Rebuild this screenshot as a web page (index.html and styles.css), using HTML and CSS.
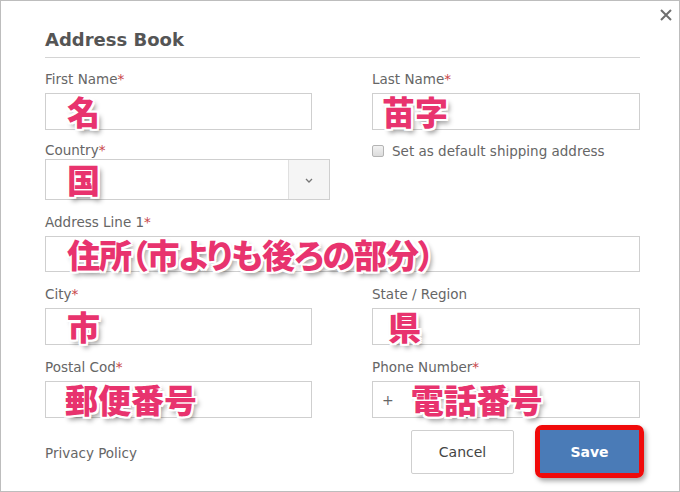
FILE: index.html
```html
<!DOCTYPE html>
<html lang="ja">
<head>
  <meta charset="UTF-8" />
  <meta name="viewport" content="width=device-width, initial-scale=1.0"/>
  <title>Address Book</title>
  <link rel="stylesheet" href="styles.css">
</head>
<body>

  <div class="dialog">
    <svg class="close" width="12" height="12" viewBox="0 0 12 12">
      <path d="M1 1 L11 11 M11 1 L1 11" stroke="#6f6f6f" stroke-width="2" fill="none"/>
    </svg>

    <h1 class="title">Address Book</h1>

    <div class="form">
      <div class="field">
        <div class="label">First Name<span class="req">*</span></div>
        <div class="input"><span class="note">名</span></div>
      </div>
      <div class="field">
        <div class="label">Last Name<span class="req">*</span></div>
        <div class="input pad-s"><span class="note">苗字</span></div>
      </div>

      <div class="field">
        <div class="label tight">Country<span class="req">*</span></div>
        <div class="select">
          <div class="input select-box"><span class="note">国</span></div>
          <div class="select-btn">
            <svg width="8" height="5" viewBox="0 0 8 5">
              <path d="M1 1 L4 4 L7 1" stroke="#777" stroke-width="1.3" fill="none"/>
            </svg>
          </div>
        </div>
      </div>
      <div class="field">
        <label class="check"><span class="box"></span>Set as default shipping address</label>
      </div>

      <div class="field wide">
        <div class="label">Address Line 1<span class="req">*</span></div>
        <div class="input"><span class="note narrow">住所（市よりも後ろの部分）</span></div>
      </div>

      <div class="field">
        <div class="label">City<span class="req">*</span></div>
        <div class="input"><span class="note">市</span></div>
      </div>
      <div class="field">
        <div class="label">State / Region</div>
        <div class="input pad-m"><span class="note">県</span></div>
      </div>

      <div class="field">
        <div class="label">Postal Cod<span class="req">*</span></div>
        <div class="input pad-xs"><span class="note">郵便番号</span></div>
      </div>
      <div class="field">
        <div class="label">Phone Number<span class="req">*</span></div>
        <div class="input pad-s"><span class="plus">+</span><span class="note">電話番号</span></div>
      </div>
    </div>

    <div class="footer">
      <a class="privacy">Privacy Policy</a>
      <div class="buttons">
        <button class="btn cancel">Cancel</button>
        <span class="mark"><button class="btn save">Save</button></span>
      </div>
    </div>
  </div>

</body>
</html>
```

FILE: styles.css
```css
html, body {
  margin: 0;
  background: #fff;
}

.dialog {
  position: relative;
  box-sizing: border-box;
  width: 680px;
  height: 492px;
  border: 1px solid #bdbdbd;
  padding: 28px 39px 0 44px;
  font-family: "DejaVu Sans", Verdana, sans-serif;
  color: #666;
  overflow: hidden;
}

.close {
  position: absolute;
  top: 8px;
  right: 7px;
}

/* Title */
.title {
  margin: 0;
  font-size: 18px;
  line-height: 22px;
  font-weight: bold;
  color: #555;
  padding-bottom: 6px;
  border-bottom: 1px solid #d4d4d4;
}

/* Form grid */
.form {
  display: grid;
  grid-template-columns: 267px 268px;
  column-gap: 60px;
  margin-top: 13px;
}

.field.wide {
  grid-column: 1 / 3;
}

.form > .field:nth-child(n+3) {
  margin-top: 12px;
}

.form > .field:nth-child(n+5) {
  margin-top: 14px;
}

.label {
  font-size: 13.5px;
  line-height: 16px;
  color: #666;
  margin-bottom: 6px;
}

.label.tight {
  margin-bottom: 1px;
}

.req {
  color: #c9474a;
}

.input {
  box-sizing: border-box;
  height: 37px;
  border: 1px solid #cfcfcf;
  display: flex;
  align-items: center;
  padding-left: 21px;
  white-space: nowrap;
}

.field.wide .input {
  height: 36px;
}

.input.pad-s { padding-left: 9px; }
.input.pad-m { padding-left: 15px; }
.input.pad-xs { padding-left: 19px; }

.plus {
  font-size: 14px;
  color: #666;
  margin-right: 17px;
}

/* Select */
.select {
  display: flex;
  width: 285px;
  height: 41px;
  box-sizing: border-box;
  border: 1px solid #cfcfcf;
}

.select .select-box {
  flex: 1;
  height: auto;
  border: none;
  padding-left: 21px;
}

.select-btn {
  width: 40px;
  border-left: 1px solid #e0e0e0;
  background: #f5f5f5;
  display: flex;
  align-items: center;
  justify-content: center;
  padding-top: 2px;
}

/* Checkbox */
.check {
  display: flex;
  align-items: center;
  font-size: 13.5px;
  line-height: 16px;
  color: #666;
  margin-top: 1px;
}

.check .box {
  width: 10px;
  height: 10px;
  border: 1px solid #b4b4b4;
  border-radius: 2px;
  background: linear-gradient(#f2f2f2, #dcdcdc);
  margin-right: 8px;
}

/* Pink annotations */
.note {
  font-family: "Noto Sans CJK JP", sans-serif;
  font-weight: 900;
  font-size: 33px;
  line-height: 1;
  color: #e8336e;
  font-feature-settings: "palt";
  text-shadow:
    2px 0 0 #fff, -2px 0 0 #fff, 0 2px 0 #fff, 0 -2px 0 #fff,
    2px 2px 0 #fff, -2px -2px 0 #fff, 2px -2px 0 #fff, -2px 2px 0 #fff,
    3px 4px 5px rgba(0, 0, 0, 0.45);
}

.note.narrow {
  letter-spacing: -1px;
}

/* Footer */
.footer {
  display: flex;
  justify-content: space-between;
  align-items: center;
  margin-top: 7px;
}

.privacy {
  font-size: 13.5px;
  color: #666;
  padding-top: 3px;
}

.buttons {
  display: flex;
  align-items: center;
  gap: 21px;
  margin-right: -4px;
}

.btn {
  font-family: "DejaVu Sans", Verdana, sans-serif;
  font-size: 14px;
  cursor: pointer;
}

.cancel {
  width: 103px;
  height: 44px;
  background: #fff;
  border: 1px solid #cfcfcf;
  border-radius: 2px;
  color: #444;
}

.mark {
  display: block;
  border: 5px solid #f00a0a;
  border-radius: 7px;
  box-shadow: 2px 3px 5px rgba(0, 0, 0, 0.35);
}

.save {
  display: block;
  width: 99px;
  height: 43px;
  border: none;
  background: #4a7bb7;
  color: #fff;
  font-weight: bold;
  font-size: 14px;
}
```
